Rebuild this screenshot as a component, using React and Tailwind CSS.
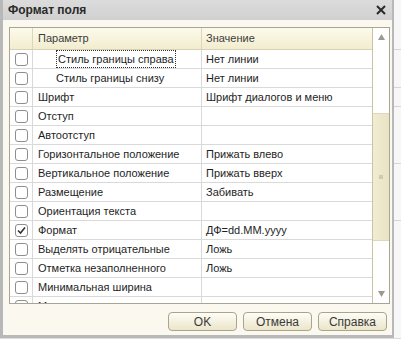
import React from "react";

const rows = [
  { p: "Стиль границы справа", v: "Нет линии", indent: true, focus: true },
  { p: "Стиль границы снизу", v: "Нет линии", indent: true },
  { p: "Шрифт", v: "Шрифт диалогов и меню" },
  { p: "Отступ", v: "" },
  { p: "Автоотступ", v: "" },
  { p: "Горизонтальное положение", v: "Прижать влево" },
  { p: "Вертикальное положение", v: "Прижать вверх" },
  { p: "Размещение", v: "Забивать" },
  { p: "Ориентация текста", v: "" },
  { p: "Формат", v: "ДФ=dd.MM.yyyy", checked: true },
  { p: "Выделять отрицательные", v: "Ложь" },
  { p: "Отметка незаполненного", v: "Ложь" },
  { p: "Минимальная ширина", v: "" },
  { p: "Максимальная ширина", v: "" },
];

function Checkbox({ checked }) {
  return (
    <div className="w-[13px] h-[13px] rounded-[3px] border border-[#8e8e8e] bg-white flex items-center justify-center">
      {checked && (
        <svg width="9" height="9" viewBox="0 0 9 9">
          <path d="M1 4.5 L3.5 7 L8 1.5" stroke="#333" strokeWidth="1.6" fill="none" />
        </svg>
      )}
    </div>
  );
}

function Btn({ children }) {
  return (
    <div className="w-[69px] h-[19px] rounded-[4px] border border-[#a9a48c] bg-gradient-to-b from-[#fefdf7] to-[#ebe5c9] flex items-center justify-center text-[#3a3a3a] text-[12px]">
      {children}
    </div>
  );
}

export default function App() {
  return (
    <div
      className="w-[401px] h-[343px] overflow-hidden bg-[#f4f4f4] flex flex-col"
      style={{ fontFamily: '"Liberation Sans", Arial, sans-serif' }}
    >
      <div className="flex h-[338px]">
        <div className="w-[394px] h-[338px] flex flex-col border-l-[3px] border-r-[2px] border-b-[3px] border-[#b8b8b8] bg-[#fbf9ef]">
          <div className="h-[20px] shrink-0 bg-gradient-to-b from-[#dcdcdc] to-[#d0d0d0] flex items-center justify-between pl-[5px] pr-[6px]">
            <span className="font-bold text-[12px] text-[#2a2a2a]">Формат поля</span>
            <svg width="10" height="10" viewBox="0 0 10 10">
              <path d="M1 1 L9 9 M9 1 L1 9" stroke="#2a2a2a" strokeWidth="2" />
            </svg>
          </div>
          <div className="flex-1 flex flex-col pl-[6px] pr-[2px] pt-[7px]">
            <div className="w-[381px] h-[277px] border border-[#a8a595] flex bg-white">
              <div className="flex-1 flex flex-col overflow-hidden">
                <div className="h-[22px] shrink-0 flex border-b border-[#d8d2b2] bg-gradient-to-b from-[#fcfaea] to-[#f2edd0] text-[11px] text-[#3c3c3c]">
                  <div className="w-[23px] border-r border-[#ddd7b8]" />
                  <div className="w-[169px] border-r border-[#ddd7b8] flex items-center pl-[5px]">Параметр</div>
                  <div className="flex-1 flex items-center pl-[4px]">Значение</div>
                </div>
                {rows.map((r, i) => (
                  <div key={i} className="h-[19px] shrink-0 flex border-b border-[#d9d9d9] text-[11px] text-[#1e1e1e]">
                    <div className="w-[23px] border-r border-[#d9d9d9] flex items-center justify-center">
                      <Checkbox checked={r.checked} />
                    </div>
                    <div className={`w-[169px] border-r border-[#d9d9d9] flex items-center ${r.indent ? "pl-[23px]" : "pl-[5px]"}`}>
                      <span className={r.focus ? "border border-dotted border-[#333] px-[1px] h-[18px] flex items-center" : ""}>{r.p}</span>
                    </div>
                    <div className="flex-1 flex items-center pl-[4px] whitespace-nowrap">{r.v}</div>
                  </div>
                ))}
              </div>
              <div className="w-[17px] shrink-0 border-l border-[#c9c4a8] bg-white flex flex-col">
                <div className="h-[18px] flex items-center justify-center">
                  <svg width="7" height="6" viewBox="0 0 7 6"><path d="M3.5 0 L7 6 L0 6 Z" fill="#9a9a8e" /></svg>
                </div>
                <div className="h-[67px]" />
                <div className="h-[128px] bg-gradient-to-r from-[#f1ecd3] to-[#e9e3c3] border-y border-[#ddd7bb] flex items-center justify-center">
                  <div className="w-[4px] h-[4px] bg-[#cfc9ad]" />
                </div>
                <div className="flex-1" />
                <div className="h-[18px] flex items-center justify-center">
                  <svg width="7" height="6" viewBox="0 0 7 6"><path d="M0 0 L7 0 L3.5 6 Z" fill="#9a9a8e" /></svg>
                </div>
              </div>
            </div>
            <div className="flex justify-end gap-[6px] pr-[3px] pt-[8px]">
              <Btn>OK</Btn>
              <Btn>Отмена</Btn>
              <Btn>Справка</Btn>
            </div>
          </div>
        </div>
        <div className="flex-1 flex flex-col bg-[#f7f7f7]">
          <div className="h-[50px] border-b border-[#d6d6d6]" />
          <div className="h-[38px] border-b border-[#d6d6d6]" />
          <div className="h-[19px] border-b border-[#d6d6d6]" />
          <div className="h-[57px] border-b border-[#d6d6d6]" />
          <div className="h-[57px] border-b border-[#d6d6d6]" />
          <div className="flex-1" />
        </div>
      </div>
      <div className="flex-1 bg-white border-t border-[#dcdcdc]" />
    </div>
  );
}
